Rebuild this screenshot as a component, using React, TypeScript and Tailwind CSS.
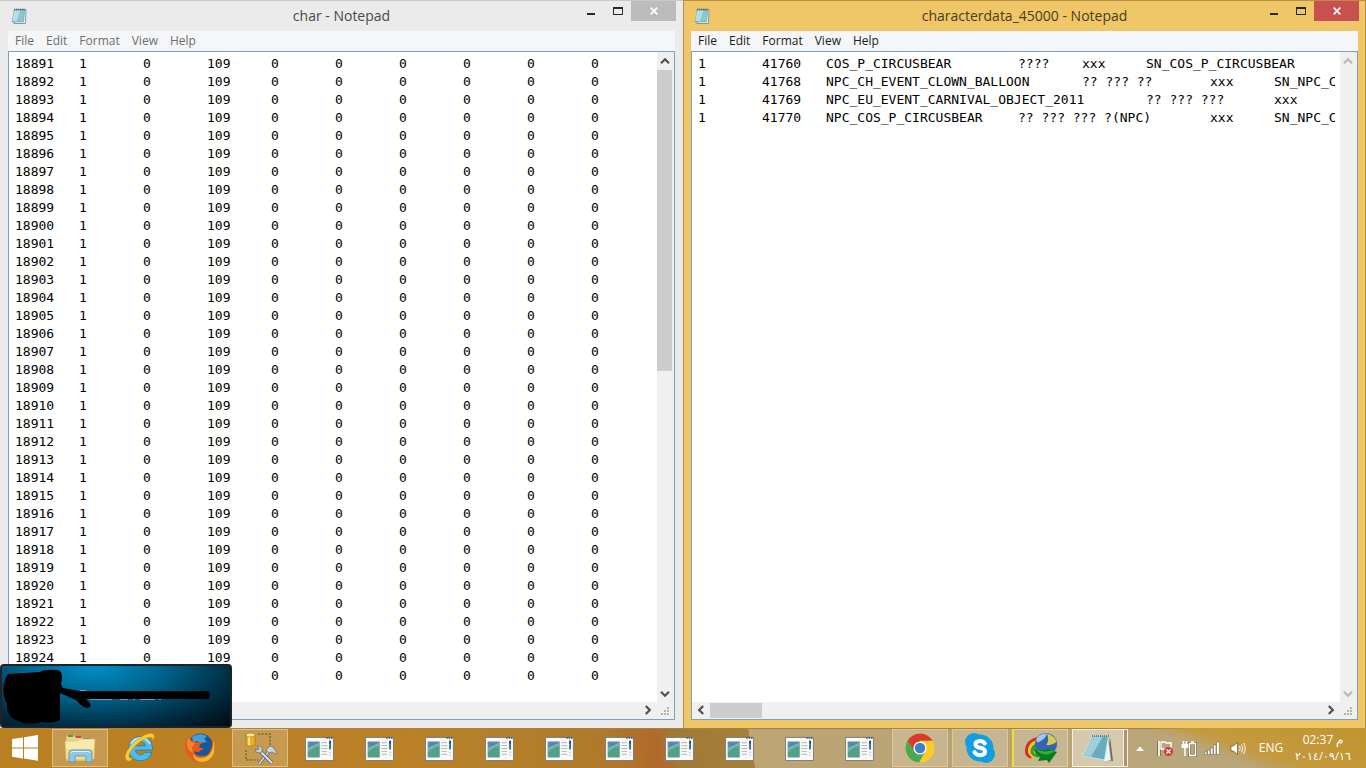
import { useState } from 'react';
import type { ReactNode } from 'react';

const charRows = Array.from({ length: 35 }, (_, i) =>
  [18891 + i, 1, 0, 109, 0, 0, 0, 0, 0, 0].join('\t')
).join('\n');

const characterData = [
  '1\t41760\tCOS_P_CIRCUSBEAR\t????\txxx\tSN_COS_P_CIRCUSBEAR',
  '1\t41768\tNPC_CH_EVENT_CLOWN_BALLOON\t?? ??? ??\txxx\tSN_NPC_CH_EVENT_CLOWN_BALLOON',
  '1\t41769\tNPC_EU_EVENT_CARNIVAL_OBJECT_2011\t?? ??? ???\txxx',
  '1\t41770\tNPC_COS_P_CIRCUSBEAR\t?? ??? ??? ?(NPC)\txxx\tSN_NPC_COS_P_CIRCUSBEAR',
].join('\n');

const menus = ['File', 'Edit', 'Format', 'View', 'Help'];

function NotepadIcon() {
  return (
    <svg viewBox="0 0 16 16" className="h-4 w-4">
      <path d="M4 1.5h11l-.5 14H3z" fill="#f4f8f8" stroke="#6d8187" strokeWidth="0.8" />
      <path d="M3.2 1.5h10.600L12.600 14H1z" fill="#8cc7d1" stroke="#5b949d" strokeWidth="0.5" />
      <path d="M3.2 2h6L6 13H1.400z" fill="#b3dfe4" />
      <path d="M3.5 0.6v2M5.4 0.6v2M7.3 0.6v2M9.2 0.6v2M11.1 0.6v2M13 0.6v2" stroke="#37555c" strokeWidth="0.8" />
    </svg>
  );
}

function Chevron({ d, muted }: { d: string; muted?: boolean }) {
  return (
    <svg viewBox="0 0 10 10" className="h-[10px] w-[10px]">
      <path d={d} fill="none" stroke={muted ? '#b9b9b9' : '#505050'} strokeWidth="2.2" />
    </svg>
  );
}

const UP = 'M1 7.2L5 3.2L9 7.2';
const DOWN = 'M1 2.8L5 6.8L9 2.8';
const LEFT = 'M7.2 1L3.2 5L7.2 9';
const RIGHT = 'M2.8 1L6.8 5L2.8 9';

type NotepadProps = {
  title: string;
  text: string;
  active?: boolean;
};

function Notepad({ title, text, active }: NotepadProps) {
  const [value, setValue] = useState(text);

  return (
    <section
      className={`flex min-w-0 flex-col border-t px-2 pb-2 ${
        active ? 'border-[#b9923f] bg-[#efc768] shadow-[inset_1px_0_#b9923f,inset_-1px_0_#b9923f]' : 'border-[#c9c9c9] bg-[#ebebeb]'
      }`}
    >
      <header className="-mr-px flex h-[30px] shrink-0 items-start">
        <div className="flex h-[29px] w-[97px] items-center pl-[3px]">
          <NotepadIcon />
        </div>
        <h1 className={`flex-1 truncate pt-1 text-center text-sm leading-[22px] ${active ? 'text-[#4d3d17]' : 'text-[#4a4a4a]'}`}>
          {title}
        </h1>
        <div className="flex h-5 w-[98px] shrink-0">
          <button aria-label="Minimize" className="flex w-[26px] items-center justify-center pt-[5px]">
            <span className="h-[2px] w-2 bg-[#2a2a2a]" />
          </button>
          <button aria-label="Maximize" className="flex w-[27px] items-center justify-center">
            <span className="h-2 w-[10px] border border-t-2 border-[#2a2a2a]" />
          </button>
          <button
            aria-label="Close"
            className={`flex w-[45px] items-center justify-center ${active ? 'bg-[#c75050]' : 'bg-[#bcbcbc]'}`}
          >
            <svg viewBox="0 0 8 8" className="h-2 w-2">
              <path d="M0.7 0.7L7.3 7.3M7.3 0.7L0.7 7.3" stroke="#fff" strokeWidth="1.7" />
            </svg>
          </button>
        </div>
      </header>

      <nav className={`flex h-5 shrink-0 items-center gap-3 bg-[#f5f6f7] pl-[7px] text-xs ${active ? 'text-[#1a1a1a]' : 'text-[#6d6d6d]'}`}>
        {menus.map((name) => (
          <button key={name}>{name}</button>
        ))}
      </nav>

      <div className="flex min-h-0 flex-1 flex-col border border-[#7f9fbd] bg-[#f0f0f0] pr-px pb-px">
        <div className="flex min-h-0 flex-1">
          <div className="flex min-w-0 flex-1 bg-white pt-[3px] pr-[5px] pl-[6px]">
            <textarea
              aria-label={title}
              wrap="off"
              spellCheck={false}
              value={value}
              onChange={(e) => setValue(e.target.value)}
              className="min-w-0 flex-1 resize-none overflow-hidden font-['DejaVu_Sans_Mono',monospace] text-[13px] leading-[18px] text-black outline-none [tab-size:64px]"
            />
          </div>
          <div className="flex w-4 shrink-0 flex-col items-center">
            <span className="flex h-[18px] items-center"><Chevron d={UP} muted={active} /></span>
            <div className="flex w-full flex-1 flex-col">
              {!active && <div className="h-[49%] w-[15px] bg-[#cdcdcd]" />}
            </div>
            <span className="flex h-[17px] items-center"><Chevron d={DOWN} muted={active} /></span>
          </div>
        </div>
        <div className="flex h-4 shrink-0 items-center">
          <span className="flex w-[18px] justify-center"><Chevron d={LEFT} /></span>
          <div className="h-[15px] flex-1">
            {active && <div className="h-full w-[52px] bg-[#cdcdcd]" />}
          </div>
          <span className="flex w-[18px] justify-center"><Chevron d={RIGHT} /></span>
          <svg viewBox="0 0 16 16" className="h-4 w-4" fill="#b5b5b5">
            <path d="M10 5h2v2h-2zM10 8h2v2h-2zM10 11h2v2h-2zM7 8h2v2H7zM7 11h2v2H7zM4 11h2v2H4z" />
          </svg>
        </div>
      </div>
    </section>
  );
}

/* blue card in the corner, with its name and picture scribbled out */
function Toast() {
  return (
    <div className="absolute bottom-10 left-0 h-16 w-[232px] overflow-hidden rounded border-2 border-[#1d2428] bg-[radial-gradient(ellipse_at_40%_0%,#0090c6_0%,#00658f_35%,#00283c_75%,#000a12_100%)]">
      <svg viewBox="0 0 228 60" className="h-full w-full">
        <path d="M78 25h6M88 33h22M118 33h8M132 26v8M138 33h14M152 26v8M158 26v8" stroke="#8fb0bf" strokeWidth="1.5" />
        <path d="M6 8L38 6Q42 3 56 4Q62 6 59 18L61 22L78 25H206Q210 29 206 33H84Q92 40 86 42Q82 43 74 34L58 27V54Q50 58 40 56Q25 60 14 54Q4 50 5 38Q-3 22 6 8Z" fill="#000" />
      </svg>
    </div>
  );
}

function WindowsLogo() {
  return (
    <svg viewBox="0 0 28 28" className="h-7 w-7" fill="#fff">
      <path d="M1 5L12 3.4V13.4H1zM13 3.2L27 1V13.4H13zM1 14.4H12V24.4L1 22.8zM13 14.4H27V26.8L13 24.6z" />
    </svg>
  );
}

function ExplorerIcon() {
  return (
    <svg viewBox="0 0 32 32" className="h-8 w-8">
      <path d="M2 5l1-2h7l1 2h7l1 2h10v22H2z" fill="#ead489" stroke="#b79a49" strokeWidth="0.6" />
      <path d="M4 3h5v2H4z" fill="#35a852" />
      <path d="M12 4h5v2h-5z" fill="#d44b3a" />
      <path d="M20 6h6v2h-6z" fill="#4489c9" />
      <path d="M1 9h12l2-2h16l-1 20H2z" fill="#f8eaaa" stroke="#d2b967" strokeWidth="0.6" />
      <path d="M2 17h28l-1 10H3z" fill="#f1db86" />
      <path d="M5 30V21q0-3 3-3h17q3 0 3 3v9h-6v-6H11v6z" fill="#8fc7ea" stroke="#4d93c4" strokeWidth="0.8" />
      <path d="M7 21q0-1.500 2-1.500h15q2 0 2 1.500" fill="none" stroke="#dff2fc" />
    </svg>
  );
}

function IeIcon() {
  return (
    <svg viewBox="0 0 32 32" className="h-8 w-8">
      <path d="M28.500 18H11.500c.2 3 2.200 4.800 5 4.800 2 0 3.500-.9 4.300-2.500h7.100C26.300 25.600 22 28.700 16.500 28.700 9.600 28.700 4.500 23.700 4.500 16.800S9.700 4.600 16.500 4.600c7.500 0 12.300 5.200 12 13.400zM11.600 13.800h9.800c-.4-2.600-2.200-4.100-4.800-4.100s-4.500 1.500-5 4.100z" fill="#4bbcf0" stroke="#1b7fb8" strokeWidth="0.8" />
      <path d="M7 12q3-6 10-6 6 0 9 6" fill="none" stroke="#b4e8fc" strokeWidth="1.800" />
      <path d="M4.500 29C-2 28 2 16.500 12 8.500 20 2 28.500-.5 30 3c.6 1.500 0 3.500-1 5.500 0-3-2-4-6-2.500C16 8.500 8 16 5.500 21.500 4 25 5 27 9 26c-1.500 1.800-2.800 3.200-4.500 3z" fill="#f8cd35" stroke="#c7901a" strokeWidth="0.5" />
    </svg>
  );
}

function FirefoxIcon() {
  return (
    <svg viewBox="0 0 32 32" className="h-8 w-8">
      <circle cx="16.500" cy="14" r="12.500" fill="#17589c" />
      <path d="M8 5q7-5 15-1l-3 3 3 3-6 1-4-2-4 1z" fill="#3fa3d9" />
      <path d="M2.500 8q-3 9 1 15 5 8 13 7.500Q28 29.500 30.500 19q1-7-2.500-13 .5 5-.5 9-1.500 9-9 9-8 0-8.500-5 4 2 6 0t4-1q-1-3-5-2.500l1-3 3-2q-4-1-6 0-2.500-2.500-5-1.500L5 4.500z" fill="#e5591c" />
      <path d="M28.500 7q2 6-1 12-3 7-10 7-7 0-9-5 1 9 10 9 8-1 11-8Q32 14 28.500 7z" fill="#f9b82e" />
      <path d="M3 9q1-2 2-3.500L7 10l4 1-3 4 1 6q-7-3-6-12z" fill="#f1892a" />
    </svg>
  );
}

function DbToolsIcon() {
  return (
    <svg viewBox="0 0 36 36" className="h-9 w-9">
      <path d="M16 4h12v12M4 20v10h12" fill="none" stroke="#66762a" strokeWidth="1.600" strokeDasharray="2 1.500" />
      <path d="M4 5v10q4.500 3 9 0V5z" fill="#e8b022" stroke="#9a7010" strokeWidth="0.6" />
      <path d="M6 7v8l2 .5V7z" fill="#fbe590" />
      <ellipse cx="8.500" cy="5" rx="4.500" ry="2" fill="#fdeb9a" stroke="#9a7010" strokeWidth="0.6" />
      <path d="M28 20L17 34" stroke="#68727c" strokeWidth="3.400" />
      <path d="M28 20L17 34" stroke="#c8d2da" strokeWidth="1.600" />
      <path d="M18 21L30 33" stroke="#59626c" strokeWidth="3.600" />
      <path d="M18 21L30 33" stroke="#dbe3e9" strokeWidth="2" />
      <path d="M15 16q4-1 5 2v4l-3 1q-4 0-4-4l3 1 1-2z" fill="#c9d2d9" stroke="#5e6871" strokeWidth="0.700" />
      <path d="M24 20l4-4 3 1 4 6-1 1-4-2-3 1z" fill="#cbd4db" stroke="#5e6871" strokeWidth="0.700" />
    </svg>
  );
}

function WindowIcon() {
  return (
    <svg viewBox="0 0 30 26" className="mr-px h-[25px] w-[29px]">
      <path d="M0.500 1.500h29v24h-29z" fill="#fafafa" stroke="#7d7d78" />
      <path d="M22 2h1.500M24.500 2h1.500M27 2h1.500" stroke="#3c4c66" strokeWidth="1.500" />
      <path d="M3 6h12v16H3z" fill="#4f86b2" stroke="#8ba5b3" strokeWidth="0.800" />
      <path d="M3.400 15q5-6 11.200-6v12.600H3.400z" fill="#4fa383" />
      <path d="M3.400 12q5-2 11.200-5v3.500Q7 12 3.400 17z" fill="#79b5b4" />
      <path d="M17 7h6M17 10h6M17 13h6M17 16h6M17 19h6" stroke="#b5b5b5" />
      <path d="M25 5h2v9h-2z" fill="#2f7484" />
      <path d="M25 5h2v3h-2z" fill="#2b4a86" />
      <path d="M25 17h2M25 20h2" stroke="#c2c2c2" />
    </svg>
  );
}

function ChromeIcon() {
  return (
    <svg viewBox="0 0 32 32" className="h-8 w-8">
      <circle cx="16" cy="16" r="14.500" fill="#f7cd26" />
      <path d="M16 16L3.500 8.700A14.500 14.500 0 0 0 15 30.500L21 20z" fill="#4aa850" />
      <path d="M3.500 8.700A14.500 14.500 0 0 1 28.600 8.800H16L10 18z" fill="#d93a2e" />
      <circle cx="16" cy="16" r="6.600" fill="#f4f4f4" />
      <circle cx="16" cy="16" r="5.200" fill="#3f7fc6" />
    </svg>
  );
}

function SkypeIcon() {
  return (
    <svg viewBox="0 0 32 32" className="h-8 w-8">
      <circle cx="10" cy="10" r="9" fill="#0f9fdf" />
      <circle cx="22" cy="22" r="9" fill="#0f9fdf" />
      <circle cx="16" cy="16" r="13.500" fill="#0f9fdf" />
      <path d="M20.800 11.500Q19.500 9 16 9q-4.500.2-4.500 3.200 0 2.600 4.500 3.600 5 1 5 4 0 3.400-5 3.400-4 0-5.500-3" fill="none" stroke="#fff" strokeWidth="4" strokeLinecap="round" />
    </svg>
  );
}

function IdmIcon() {
  return (
    <svg viewBox="0 0 34 32" className="h-8 w-[34px]">
      <path d="M15 6Q2 9 2.500 20q.5 4 5 5" fill="none" stroke="#d22c1e" strokeWidth="3" />
      <path d="M15 9Q5 11 5.500 20q1 4 6 5" fill="none" stroke="#f2c71d" strokeWidth="3" />
      <path d="M15 12q-7 2-7 8 1 4 7 4" fill="none" stroke="#2e9b34" strokeWidth="3" />
      <circle cx="22" cy="12" r="11" fill="#3465b4" />
      <path d="M12 7q4-6 11-5.500-1 4-4 6-4 3-6 3z" fill="#9ec6ee" />
      <path d="M23 1.500q8 2 9.500 8.500-5 4-10 3 3-5 .5-11.500z" fill="#d5cb4c" />
      <path d="M10 16q8 4 14 1l-2-1 11 4-8 11-2-3-9 1 2-4q-6-3-6-9z" fill="#0a7d19" />
      <path d="M12 17q6 4 15 1.500l4 1-7 3q-9 0-12-5.500z" fill="#2bb53a" />
    </svg>
  );
}

function NotepadBigIcon() {
  return (
    <svg viewBox="0 0 32 32" className="h-8 w-8">
      <path d="M28 5l3 24-6-1z" fill="#6f6552" />
      <path d="M26 4l3 24-6 2-3-3z" fill="#eef3f3" stroke="#9aa5a5" strokeWidth="0.600" />
      <path d="M10.500 4H26.500L22.500 28 1 24z" fill="#67adbd" stroke="#d5eef0" strokeWidth="0.800" />
      <path d="M10.500 5h10L9 25 2 23.500z" fill="#9dd0d8" />
      <path d="M10 4h17" stroke="#44666d" strokeWidth="1.600" strokeDasharray="1 1" />
    </svg>
  );
}

type TaskProps = { label: string; kind?: 'plain' | 'open' | 'current' | 'flash'; children: ReactNode };

function Task({ label, kind = 'plain', children }: TaskProps) {
  const look = {
    plain: '',
    open: 'border border-[#e6cf9f]/70 bg-white/20',
    flash: 'border border-l-2 border-[#e0cfa6] border-l-[#f5e02c] bg-white/20',
    current: 'border border-[#f8f0dc] bg-white/40',
  }[kind];

  return (
    <li className="flex w-[60px] min-w-0 shrink px-[2px] py-px">
      <button aria-label={label} className={`flex flex-1 items-center justify-center ${look}`}>
        {children}
      </button>
      {/* edge of the second window stacked behind */}
      {kind === 'current' && <span className="w-1 border-y border-r border-[#f8f0dc] bg-[#a8966f]" />}
    </li>
  );
}

function Tray() {
  return (
    <div className="flex shrink-0 items-center bg-[linear-gradient(20deg,transparent_36%,#c39a3d_50%,#c1952f_100%)] text-white">
      <button aria-label="Show hidden icons" className="flex w-5 justify-center">
        <svg viewBox="0 0 8 5" className="h-[5px] w-2"><path d="M0 5L4 0.500L8 5z" fill="#fff" /></svg>
      </button>
      <button aria-label="Action Center" className="flex w-[30px] justify-center">
        <svg viewBox="0 0 17 17" className="h-[17px] w-[17px]">
          <path d="M2 1v15" stroke="#4a4020" strokeWidth="3" />
          <path d="M2 1v15" stroke="#fff" strokeWidth="1.800" />
          <path d="M4 2h4l1 1h5v7H9L8 9H4z" fill="none" stroke="#fff" strokeWidth="1.400" />
          <circle cx="11.500" cy="11.500" r="4.500" fill="#d2383a" />
          <path d="M9.500 9.500l4 4M13.500 9.500l-4 4" stroke="#fff" strokeWidth="1.400" />
        </svg>
      </button>
      <button aria-label="Battery" className="flex w-[18px] justify-center">
        <svg viewBox="0 0 16 17" className="h-[17px] w-4" fill="none" stroke="#fff">
          <path d="M8.500 3.500h6v12h-6z" stroke="#4a4020" strokeWidth="3" />
          <path d="M2.500 1v4M5.500 1v4M4 8v8" strokeWidth="1.500" />
          <path d="M1 4.500h6v3H1z" fill="#fff" />
          <path d="M8.500 3.500h6v12h-6z" strokeWidth="1.800" />
          <path d="M10 2h3" strokeWidth="1.500" />
        </svg>
      </button>
      <button aria-label="Network" className="flex w-7 justify-center">
        <svg viewBox="0 0 16 14" className="h-[14px] w-4" fill="#fff" stroke="#4a4020" strokeWidth="0.400">
          <path d="M0.500 11h2.400v2.500H0.500zM3.500 9h2.400v4.500H3.500zM6.500 7h2.400v6.500H6.500zM9.500 4h2.400v9.500H9.500zM12.500 1h2.800v12.500h-2.800z" />
        </svg>
      </button>
      <button aria-label="Volume" className="flex w-6 justify-center">
        <svg viewBox="0 0 16 15" className="h-[15px] w-4" fill="none" stroke="#fff">
          <path d="M1 5h2.500L7.500 1.500v12L3.500 10H1z" fill="#fff" stroke="#4a4020" strokeWidth="0.600" />
          <path d="M9.500 5q1.500 2.500 0 5M11.500 3.500q2.500 4 0 8M13.500 2q3.500 5.500 0 11" />
        </svg>
      </button>
      <button className="w-[42px] text-center text-xs">ENG</button>
      <button className="w-[62px] text-center text-xs leading-4">
        <span className="block" dir="ltr">02:37 م</span>
        <span className="block text-[11px]" dir="ltr">٢٠١٤/٠٩/١٦</span>
      </button>
      <div className="w-3" />
    </div>
  );
}

export default function App() {
  return (
    <div className="relative flex h-screen flex-col overflow-hidden font-['Open_Sans','Noto_Sans',sans-serif]">
      <main className="grid min-h-0 flex-1 grid-cols-2">
        <Notepad title="char - Notepad" text={charRows} />
        <Notepad title="characterdata_45000 - Notepad" text={characterData} active />
      </main>

      <Toast />

      <footer className="flex h-10 shrink-0 justify-between bg-[linear-gradient(80deg,#b98022_0%,#bb8127_28%,#b58029_36%,#b0782b_45%,#b0692a_48%,#9f7b38_50%,#a5803a_55%,#bda674_55%,#b9a375_70%,#b9a67a_86%)] shadow-[inset_0_1px_#a48340]">
        <div className="flex min-w-0">
          <button aria-label="Start" className="flex w-[50px] shrink-0 items-center justify-center">
            <WindowsLogo />
          </button>
          <ul className="flex min-w-0">
            <Task label="File Explorer" kind="open"><ExplorerIcon /></Task>
            <Task label="Internet Explorer"><IeIcon /></Task>
            <Task label="Firefox"><FirefoxIcon /></Task>
            <Task label="Database tools" kind="open"><DbToolsIcon /></Task>
            {Array.from({ length: 10 }, (_, i) => (
              <Task key={i} label={`Application ${i + 1}`}><WindowIcon /></Task>
            ))}
            <Task label="Chrome" kind="open"><ChromeIcon /></Task>
            <Task label="Skype" kind="open"><SkypeIcon /></Task>
            <Task label="Download Manager" kind="flash"><IdmIcon /></Task>
            <Task label="Notepad" kind="current"><NotepadBigIcon /></Task>
          </ul>
        </div>
        <Tray />
      </footer>
    </div>
  );
}
